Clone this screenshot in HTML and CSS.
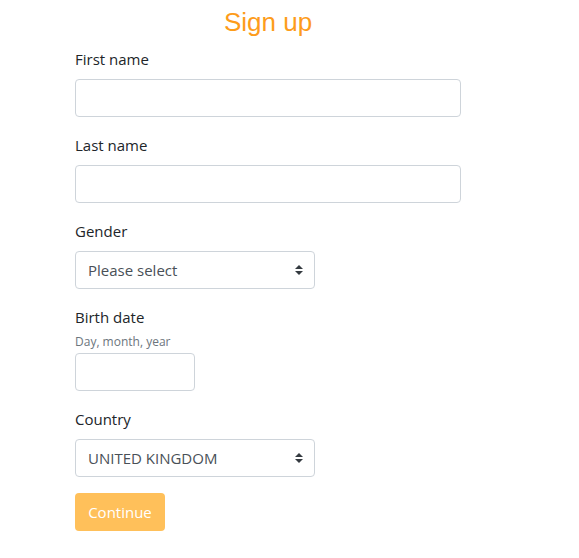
FILE: index.html
```html
<!DOCTYPE html>
<html>
<head>
<meta charset="utf-8">
<link rel="stylesheet" href="styles.css">
</head>
<body>
<form class="signup">
  <h1 class="title">Sign up</h1>
  <div class="group">
    <label class="label">First name</label>
    <input class="control" type="text">
  </div>
  <div class="group">
    <label class="label">Last name</label>
    <input class="control" type="text">
  </div>
  <div class="group">
    <label class="label">Gender</label>
    <div class="select select-md"><span>Please select</span><svg class="arrows" width="8" height="10" viewBox="0 0 4 5"><path fill="#343a40" d="M2 0L0 2h4zm0 5L0 3h4z"/></svg></div>
  </div>
  <div class="group">
    <label class="label label-tight">Birth date</label>
    <small class="hint">Day, month, year</small>
    <input class="control control-sm" type="text">
  </div>
  <div class="group">
    <label class="label">Country</label>
    <div class="select select-md"><span>UNITED KINGDOM</span><svg class="arrows" width="8" height="10" viewBox="0 0 4 5"><path fill="#343a40" d="M2 0L0 2h4zm0 5L0 3h4z"/></svg></div>
  </div>
  <button class="btn" type="button">Continue</button>
</form>
</body>
</html>
```
FILE: styles.css
```css
* { box-sizing: border-box; }
body {
  margin: 0;
  background: #fff;
  font-family: "Open Sans", "Noto Sans", sans-serif;
  font-size: 15px;
  color: #212529;
}
.signup {
  width: 386px;
  margin-left: 75px;
  display: flex;
  flex-direction: column;
}
.title {
  font-family: "Liberation Sans", Arial, sans-serif;
  font-weight: normal;
  font-size: 26px;
  line-height: 31px;
  color: #fd9c1b;
  text-align: center;
  margin: 7px 0 9px;
}
.group {
  display: flex;
  flex-direction: column;
  align-items: flex-start;
  margin-bottom: 16px;
}
.label {
  line-height: 24px;
  margin-bottom: 8px;
}
.label-tight { margin-bottom: 5px; }
.hint {
  font-size: 12px;
  line-height: 16px;
  margin-bottom: 3px;
  color: #6c757d;
}
.control {
  width: 100%;
  height: 38px;
  border: 1px solid #ced4da;
  border-radius: 4px;
  background: #fff;
  font: inherit;
  padding: 6px 12px;
}
.control-sm { width: 120px; }
.select {
  height: 38px;
  border: 1px solid #ced4da;
  border-radius: 4px;
  background: #fff;
  display: flex;
  align-items: center;
  justify-content: space-between;
  padding: 0 11px 0 12px;
  color: #495057;
}
.select-md { width: 240px; }
.arrows { display: block; }
.btn {
  width: 90px;
  height: 38px;
  border: none;
  border-radius: 4px;
  background: #ffc05a;
  color: #fff;
  font: inherit;
  font-size: 15px;
  padding: 0;
}
```
